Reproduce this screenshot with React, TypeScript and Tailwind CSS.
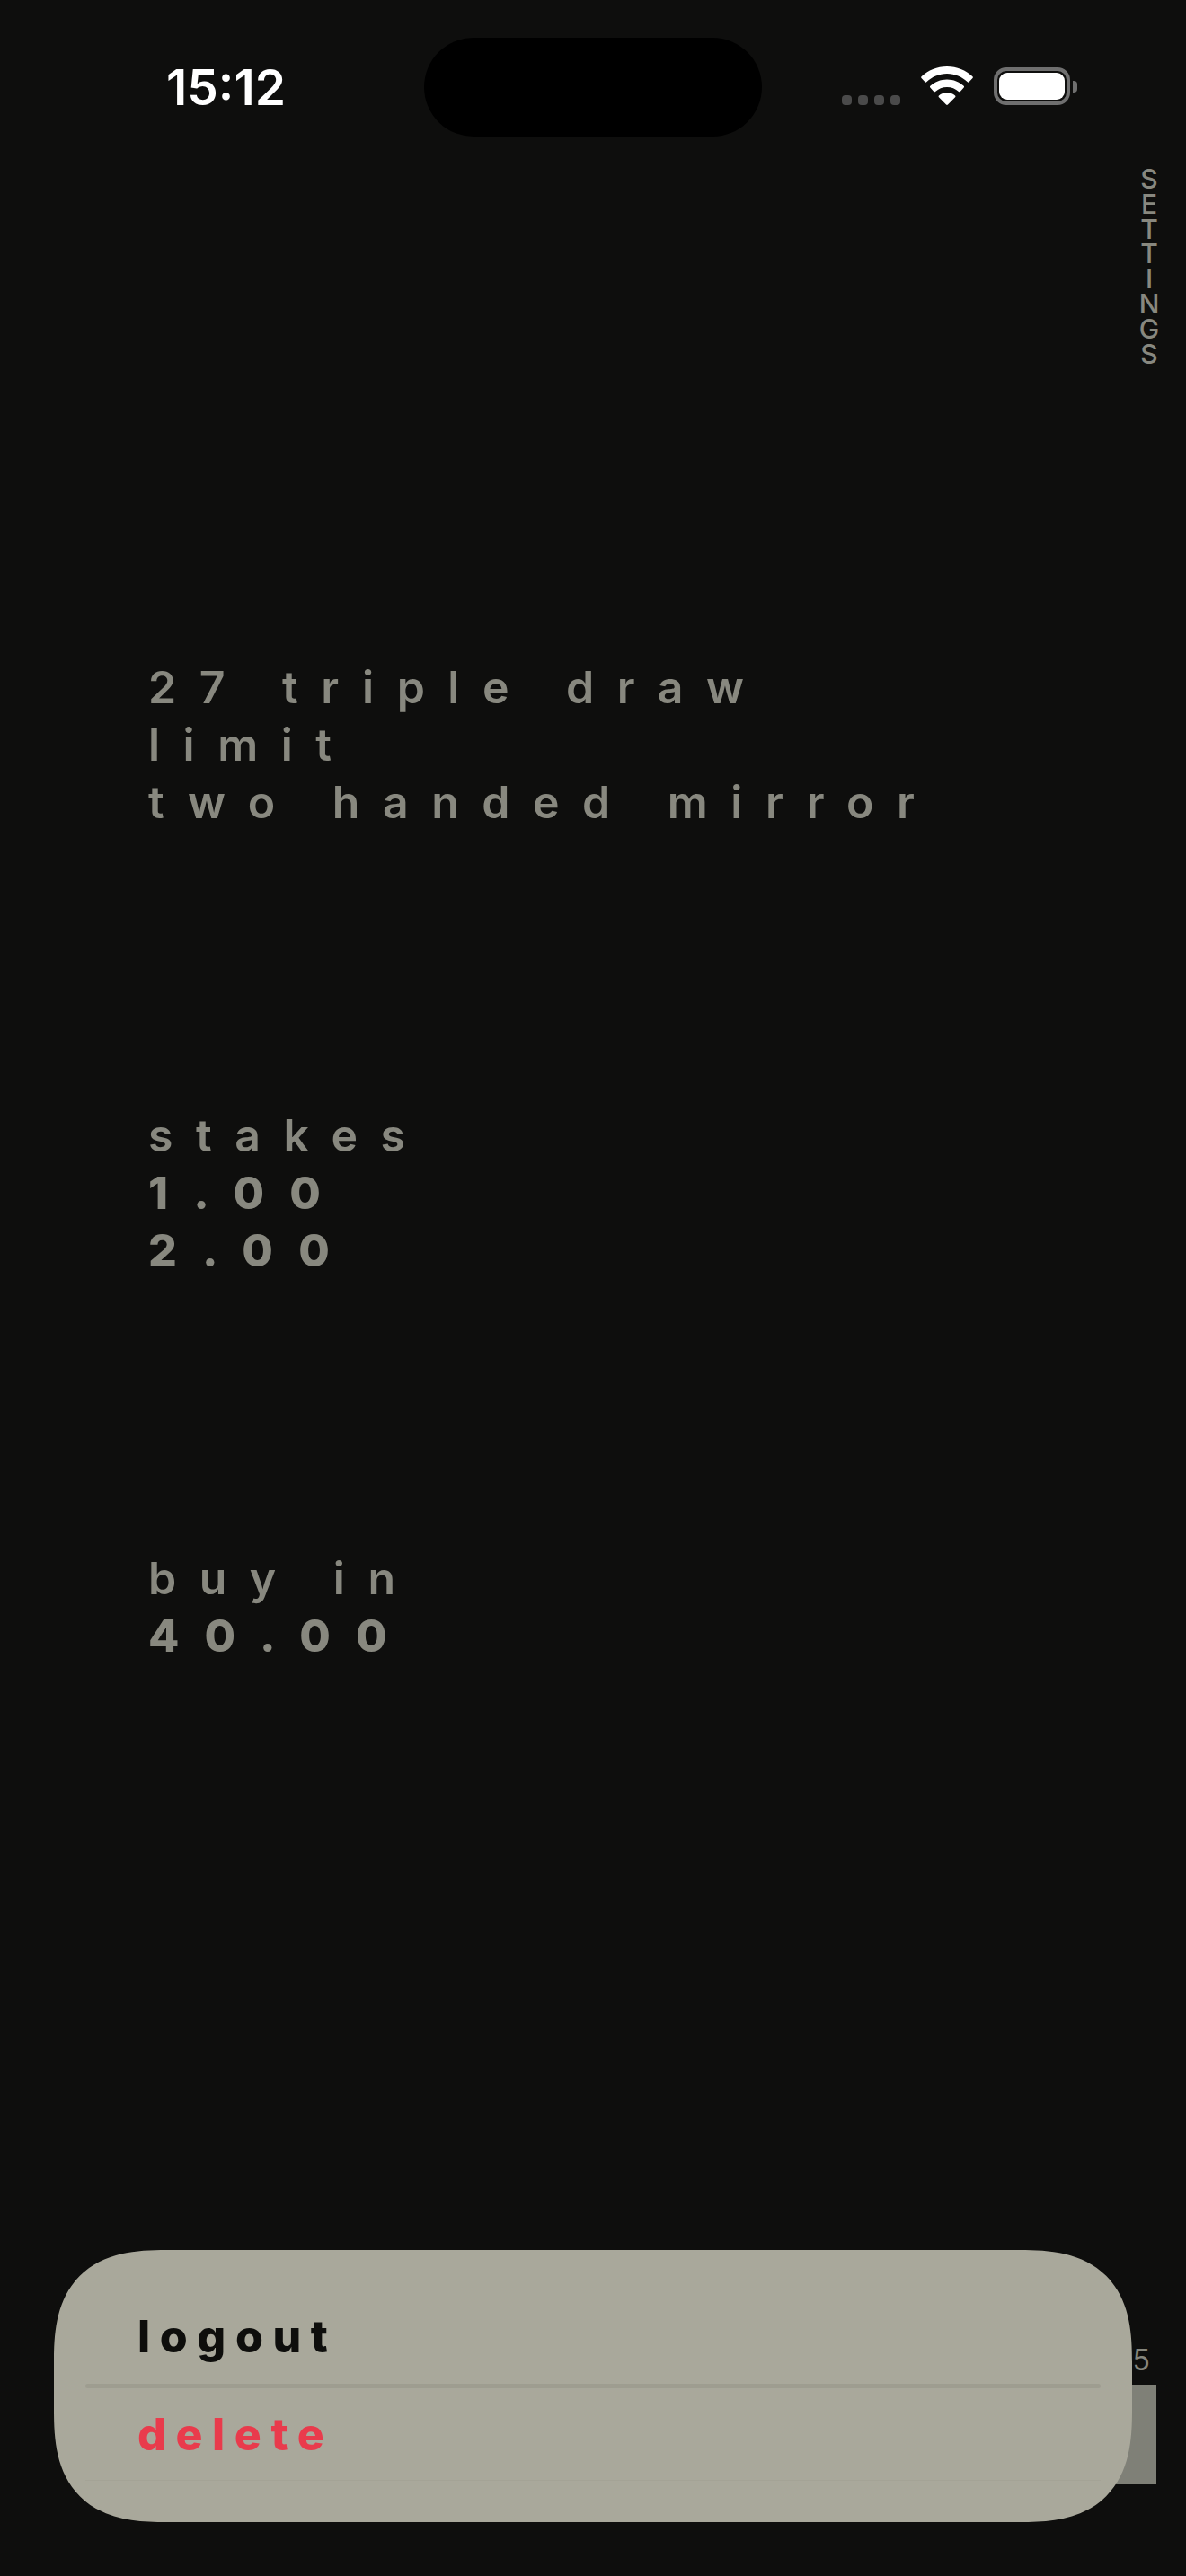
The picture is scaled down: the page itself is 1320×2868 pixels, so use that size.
const font = "font-['Inter',sans-serif]";

function Wifi() {
  return (
    <svg width="58" height="43" viewBox="0 0 58 43" fill="#ffffff">
      <path d="M29 0C18 0 8 4.200 0.500 11.200c-0.500 0.500-0.500 1.200 0 1.700l4 4.400c0.500 0.500 1.200 0.500 1.700 0C12.200 11.600 20.200 8 29 8s16.800 3.600 22.800 9.300c0.500 0.500 1.200 0.500 1.700 0l4-4.400c0.500-0.500 0.500-1.200 0-1.700C50 4.200 40 0 29 0z" />
      <path d="M29 14.500c-7.200 0-13.800 2.800-18.700 7.300-0.500 0.500-0.500 1.200 0 1.700l4 4.400c0.500 0.500 1.200 0.500 1.700 0 3.500-3.100 8-5 13-5s9.500 1.900 13 5c0.500 0.500 1.200 0.500 1.700 0l4-4.400c0.500-0.500 0.500-1.200 0-1.700C42.800 17.300 36.200 14.500 29 14.500z" />
      <path d="M29 29c-3.500 0-6.700 1.300-9.100 3.500-0.500 0.500-0.500 1.200 0 1.700l8.200 8.400c0.500 0.500 1.300 0.500 1.800 0l8.200-8.400c0.500-0.500 0.500-1.200 0-1.700C35.700 30.300 32.500 29 29 29z" />
    </svg>
  );
}

function Battery() {
  return (
    <div className="flex items-center gap-[3px]">
      <div className="h-[42px] w-[85px] rounded-[14px] border-[4px] border-[#6f6f6f] p-[2px]">
        <div className="h-full w-full rounded-[9px] bg-white" />
      </div>
      <div className="h-[13px] w-[5px] rounded-r-[4px] bg-[#6f6f6f]" />
    </div>
  );
}

function Section({ lines, className }: { lines: { text: string; bold?: boolean }[]; className: string }) {
  return (
    <div className={`flex flex-col pl-[165px] text-[#88887f] ${className}`}>
      {lines.map((line, i) => (
        <div
          key={i}
          className={`h-[64px] whitespace-pre text-[50px] leading-[64px] ${line.bold ? 'font-extrabold tracking-[28.2px]' : 'font-semibold tracking-[25.5px]'}`}
        >
          {line.text}
        </div>
      ))}
    </div>
  );
}

export default function App() {
  return (
    <div className={`relative h-[2868px] w-[1320px] overflow-hidden bg-[#0e0e0d] ${font}`}>
      {/* status bar */}
      <div className="flex h-[152px] pl-[185px] pr-[121px] pt-[42px]">
        <div className="flex h-[110px] w-[287px] items-center">
          <span className="text-[55px] font-semibold leading-none text-white">15:12</span>
        </div>
        <div className="h-[110px] w-[376px] rounded-[55px] bg-black" />
        <div className="flex flex-1 items-end justify-end gap-[23px] pb-[35px]">
          <div className="flex gap-[7px]">
            <div className="h-[11px] w-[11px] rounded-[4px] bg-[#4a4a4a]" />
            <div className="h-[11px] w-[11px] rounded-[4px] bg-[#4a4a4a]" />
            <div className="h-[11px] w-[11px] rounded-[4px] bg-[#4a4a4a]" />
            <div className="h-[11px] w-[11px] rounded-[4px] bg-[#4a4a4a]" />
          </div>
          <Wifi />
          <Battery />
        </div>
      </div>

      {/* settings */}
      <div className="mt-[34px] flex justify-end pr-[26px]">
        <div className="w-[30px] whitespace-pre-line text-center text-[30px] font-medium leading-[27.8px] text-[#88887f]">
          {'S\nE\nT\nT\nI\nN\nG\nS'}
        </div>
      </div>

      <Section
        className="mt-[325px]"
        lines={[{ text: '27 triple draw' }, { text: 'limit' }, { text: 'two handed mirror' }]}
      />
      <Section
        className="mt-[307px]"
        lines={[{ text: 'stakes' }, { text: '1.00', bold: true }, { text: '2.00', bold: true }]}
      />
      <Section className="mt-[301px]" lines={[{ text: 'buy in' }, { text: '40.00', bold: true }]} />

      {/* row behind the sheet */}
      <div className="mt-[762px] flex flex-col items-end pr-[33px]">
        <span className="mr-[7px] h-[40px] text-[32px] leading-[26px] text-[#85857c]">5</span>
        <div className="h-[111px] w-[120px] bg-[#7f8077]" />
      </div>

      {/* bottom sheet */}
      <div className="absolute left-[60px] top-[2505px] flex h-[303px] w-[1200px] flex-col rounded-[125px] bg-[#a9a89b] px-[35px] [corner-shape:superellipse(1.4)]">
        <div className="flex h-[149px] items-center pl-[58px] pt-[44px] text-[50px] font-extrabold tracking-[10.6px] text-[#0e0e0c]">
          logout
        </div>
        <div className="h-[5px] rounded-full bg-[#9e9d90]" />
        <div className="flex h-[102px] items-center pl-[58px] text-[50px] font-extrabold tracking-[10.6px] text-[#e93b4c]">
          delete
        </div>
        <div className="h-px bg-[#a4a396]" />
      </div>
    </div>
  );
}
